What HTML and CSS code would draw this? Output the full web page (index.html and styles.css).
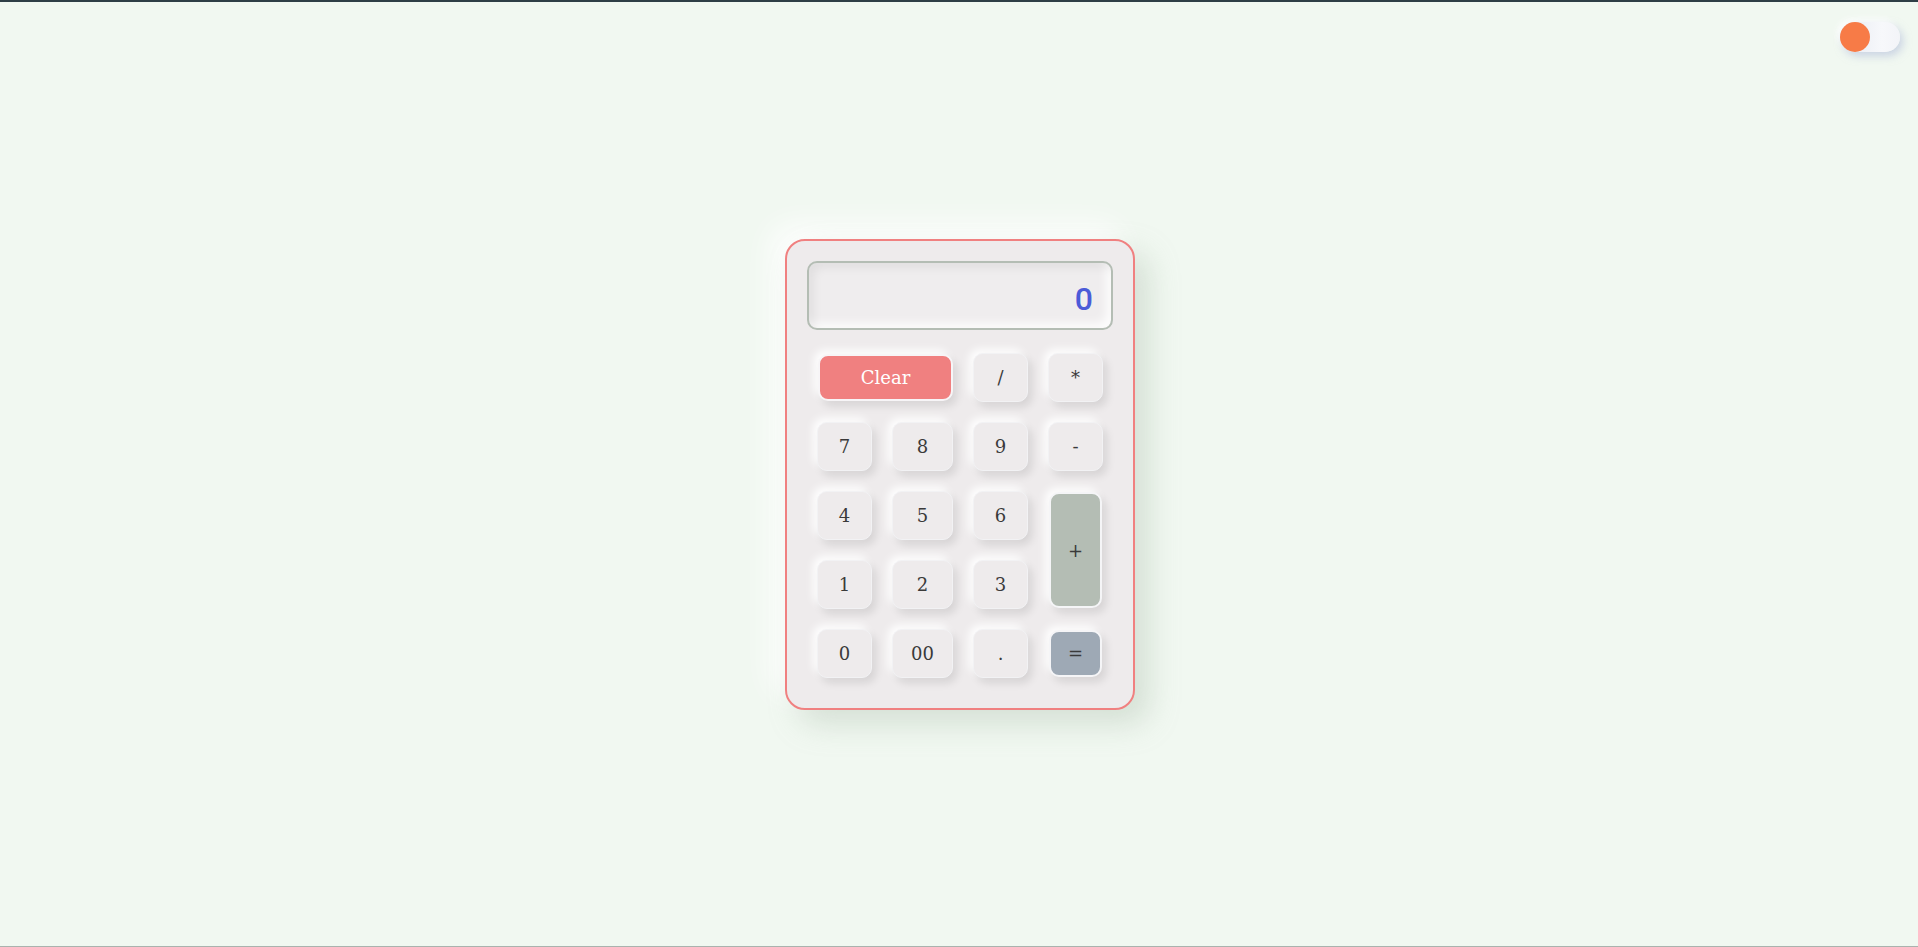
FILE: index.html
```html
<!DOCTYPE html>
<html lang="en">
<head>
<meta charset="utf-8">
<title>Calculator</title>
<link rel="stylesheet" href="styles.css">
</head>
<body>
<div class="toggle"><span class="knob"></span></div>
<main class="calc">
  <div class="display">0</div>
  <div class="keys">
    <button class="key clear">Clear</button>
    <button class="key">/</button>
    <button class="key">*</button>
    <button class="key">7</button>
    <button class="key">8</button>
    <button class="key">9</button>
    <button class="key">-</button>
    <button class="key">4</button>
    <button class="key">5</button>
    <button class="key">6</button>
    <button class="key plus">+</button>
    <button class="key">1</button>
    <button class="key">2</button>
    <button class="key">3</button>
    <button class="key">0</button>
    <button class="key">00</button>
    <button class="key">.</button>
    <button class="key equals">=</button>
  </div>
</main>
</body>
</html>
```

FILE: styles.css
```css
html, body {
  margin: 0;
  padding: 0;
}
body {
  background: #f1f8f1;
  border-top: 2px solid #2e3e46;
  border-bottom: 1px solid #aab3ae;
  height: calc(100vh - 3px);
  box-sizing: content-box;
  display: flex;
  align-items: center;
  justify-content: center;
  font-family: "DejaVu Serif", "Liberation Serif", serif;
  position: relative;
}
.toggle {
  position: absolute;
  top: 20px;
  right: 18px;
  width: 60px;
  height: 30px;
  border-radius: 15px;
  background: linear-gradient(90deg, #e6e9f1 0%, #f7f8fb 70%, #f3f4f8 100%);
  box-shadow: 3px 4px 8px rgba(170, 180, 215, 0.55), -3px -3px 6px rgba(255,255,255,0.9);
}
.knob {
  display: block;
  width: 30px;
  height: 30px;
  border-radius: 50%;
  background: #f77b47;
}
.calc {
  width: 350px;
  box-sizing: border-box;
  border: 2px solid #f08080;
  border-radius: 20px;
  background: #eeebec;
  padding: 20px;
  margin: 1px 0 0 2px;
  box-shadow: 14px 14px 30px rgba(160, 180, 160, 0.35), -14px -14px 30px rgba(255, 255, 255, 0.9);
}
.display {
  height: 69px;
  box-sizing: border-box;
  border: 2px solid #b4bdb4;
  border-radius: 10px;
  background: #efedee;
  box-shadow: inset 5px 5px 10px rgba(0, 0, 0, 0.06), inset -5px -5px 10px rgba(255, 255, 255, 0.85);
  font-family: Roboto, "Noto Sans", sans-serif;
  font-weight: 500;
  font-size: 32px;
  color: #4b5bd8;
  text-align: right;
  padding: 16px 18px 0 0;
  line-height: 40px;
}
.keys {
  margin-top: 23px;
  padding: 0 10px 10px;
  display: grid;
  grid-template-columns: 55px 61px 55px 55px;
  grid-auto-rows: 49px;
  gap: 20px;
}
.key {
  font-family: "DejaVu Serif", "Liberation Serif", serif;
  font-size: 18px;
  color: #3a3a3a;
  background: #eeebec;
  border: 1px solid #f2f2f4;
  border-radius: 10px;
  box-shadow: 4px 5px 9px rgba(0, 0, 0, 0.1), -4px -4px 9px rgba(255, 255, 255, 0.95);
  padding: 0;
  margin: 0;
  cursor: pointer;
}
.clear {
  grid-column: span 2;
  background: #f08080;
  color: #ffffff;
  border: 2px solid #f7f5f7;
  margin: 1px 0 1px 1px;
  font-size: 18px;
}
.plus {
  grid-column: 4;
  grid-row: 3 / span 2;
  background: #b4bdb4;
  border: 2px solid #f5f5f7;
  margin: 1px;
}
.equals {
  background: #9ea9b5;
  border: 2px solid #f5f5f7;
  margin: 1px;
}
```
